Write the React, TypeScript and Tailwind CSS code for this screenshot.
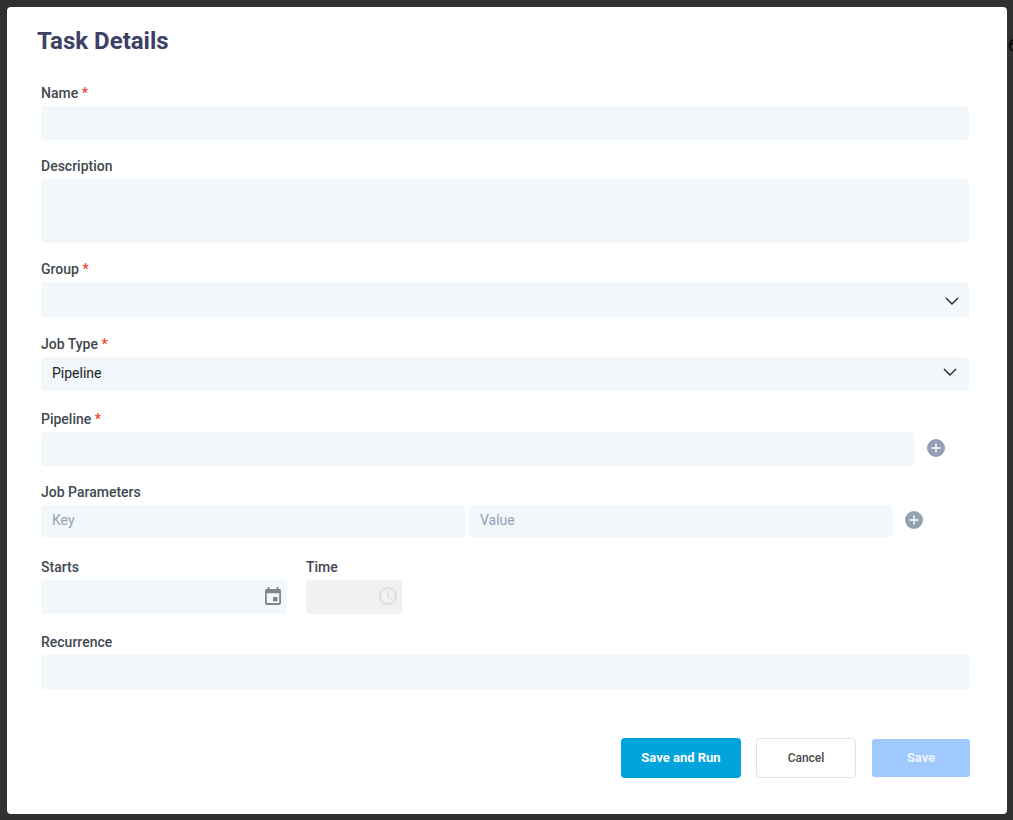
import type { ReactNode } from "react";

const fieldBox = "block w-full rounded bg-[#f1f7fa] px-[11px] text-sm text-[#212529] outline-none";

function Label({ htmlFor, required, children }: { htmlFor: string; required?: boolean; children: ReactNode }) {
  return (
    <label htmlFor={htmlFor} className="mb-[3px] block text-sm leading-5 font-medium text-[#414850]">
      {children}
      {required && <span className="text-[#ff3b30]"> *</span>}
    </label>
  );
}

function Chevron({ className }: { className: string }) {
  return (
    <svg viewBox="0 0 14 8" className={`pointer-events-none absolute h-2 w-3.5 ${className}`} fill="none" stroke="#212529" strokeWidth="1.4" aria-hidden="true">
      <path d="M1 1l6 6 6-6" />
    </svg>
  );
}

function AddButton({ label }: { label: string }) {
  return (
    <button type="button" aria-label={label} className="shrink-0 pb-0.5">
      <svg viewBox="0 0 18 18" className="size-[18px]" aria-hidden="true">
        <circle cx="9" cy="9" r="9" fill="#94a1b5" />
        <path d="M9 4.5v9M4.5 9h9" stroke="#fff" strokeWidth="1.4" />
      </svg>
    </button>
  );
}

export default function App() {
  return (
    <div className="relative min-h-screen overflow-hidden bg-[#313131] pt-[7px] pr-1.5 pb-1.5 pl-[7px] font-['Roboto',sans-serif]">
      <span className="absolute top-9 -right-1 text-base leading-5 text-black" aria-hidden="true">6</span>
      <main role="dialog" aria-labelledby="title" className="relative rounded bg-white pt-[18px] pr-[38px] pb-9 pl-[34px]">
        <h1 id="title" className="mb-[26px] -ml-1 text-2xl font-bold text-[#3e4166]">Task Details</h1>
        <form onSubmit={(e) => e.preventDefault()}>
          <div className="flex flex-col gap-4">
            <div>
              <Label htmlFor="name" required>Name</Label>
              <input id="name" type="text" className={`${fieldBox} h-[34px]`} />
            </div>
            <div>
              <Label htmlFor="description">Description</Label>
              <textarea id="description" className={`${fieldBox} h-16 resize-none`} />
            </div>
            <div>
              <Label htmlFor="group" required>Group</Label>
              <div className="relative h-9">
                <select id="group" defaultValue="" className={`${fieldBox} h-[35px] appearance-none rounded-b-none`}>
                  <option value=""></option>
                </select>
                <Chevron className="top-[15px] right-2.5" />
              </div>
            </div>
            <div>
              <Label htmlFor="job-type" required>Job Type</Label>
              <div className="relative h-9">
                <select id="job-type" className={`${fieldBox} h-[34px] appearance-none pb-0.5`}>
                  <option>Pipeline</option>
                </select>
                <Chevron className="top-[11px] right-3" />
              </div>
            </div>
            <div>
              <Label htmlFor="pipeline" required>Pipeline</Label>
              <div className="flex items-center gap-[13px] pr-6">
                <input id="pipeline" type="text" className={`${fieldBox} h-[34px]`} />
                <AddButton label="Add pipeline" />
              </div>
            </div>
            <div>
              <Label htmlFor="param-key">Job Parameters</Label>
              <div className="flex h-9 items-start pr-[46px]">
                <div className="flex h-8 w-full items-center gap-1">
                  <input id="param-key" type="text" placeholder="Key" className={`${fieldBox} h-8 pb-0.5 placeholder:text-[#94a1b8]`} />
                  <input type="text" aria-label="Value" placeholder="Value" className={`${fieldBox} mr-2 h-8 pb-0.5 placeholder:text-[#94a1b8]`} />
                  <AddButton label="Add job parameter" />
                </div>
              </div>
            </div>
            <div className="flex gap-[19px]">
              <div className="w-[246px]">
                <Label htmlFor="starts">Starts</Label>
                <div className="relative h-9">
                  <input id="starts" type="text" className={`${fieldBox} h-[34px] pr-9`} />
                  <svg viewBox="3 1 18 20" className="pointer-events-none absolute top-[7px] right-1.5 h-[18px] w-4" fill="#858585" aria-hidden="true">
                    <path d="M17 12h-5v5h5v-5zM16 1v2H8V1H6v2H5c-1.110 0-1.990.900-1.990 2L3 19c0 1.100.890 2 2 2h14c1.100 0 2-.900 2-2V5c0-1.100-.900-2-2-2h-1V1h-2zm3 18H5V8h14v11z" />
                  </svg>
                </div>
              </div>
              <div className="w-24">
                <Label htmlFor="time">Time</Label>
                <div className="relative h-9">
                  <input id="time" type="text" disabled className="block h-[34px] w-full rounded bg-[#f1f1f1] px-[11px] pr-8 text-sm" />
                  <svg viewBox="2 2 20 20" className="pointer-events-none absolute top-[7px] right-[5px] size-[18px]" fill="#d8dde1" aria-hidden="true">
                    <path d="M11.990 2C6.470 2 2 6.480 2 12s4.470 10 9.990 10C17.520 22 22 17.520 22 12S17.520 2 11.990 2zM12 20c-4.420 0-8-3.580-8-8s3.580-8 8-8 8 3.580 8 8-3.580 8-8 8z" />
                    <path d="M12.500 7H11v6l5.250 3.150.750-1.230-4.500-2.670z" />
                  </svg>
                </div>
              </div>
            </div>
            <div>
              <Label htmlFor="recurrence">Recurrence</Label>
              <input id="recurrence" type="text" className={`${fieldBox} h-[34px]`} />
            </div>
          </div>
          <div className="mt-[49px] -mr-px flex items-center justify-end text-[13px]">
            <button type="submit" className="h-10 w-[120px] rounded bg-[#00a3dc] font-bold text-white">Save and Run</button>
            <button type="button" className="ml-[15px] h-10 w-[100px] rounded border border-[#e3e3e3] bg-white text-xs font-medium text-[#4a4a4a]">Cancel</button>
            <button type="submit" disabled className="ml-4 h-[38px] w-[98px] rounded-[3px] bg-[#a0caff] font-bold text-[#ecf4ff]">Save</button>
          </div>
        </form>
      </main>
    </div>
  );
}
